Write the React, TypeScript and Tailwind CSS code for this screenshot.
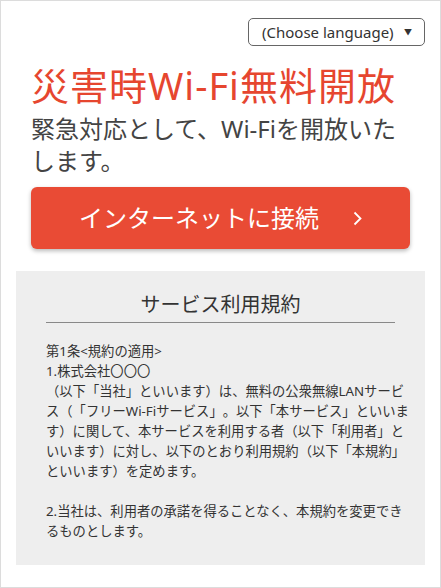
import React from 'react';

const font = { fontFamily: '"Noto Sans", "Noto Sans CJK JP", sans-serif' };

const ChevronRight = () => (
  <svg width="9" height="15" viewBox="0 0 9 15" fill="none">
    <polyline points="1.5,1.5 7.5,7.5 1.5,13.5" stroke="white" strokeWidth="1.8" />
  </svg>
);

export default function App() {
  return (
    <div
      className="w-[441px] h-[588px] border border-[#dcdcdc] bg-white px-[15px] pt-[17px] [text-spacing-trim:space-all]"
      style={font}
    >
      {/* Language picker */}
      <div className="flex justify-end">
        <div className="flex items-center justify-between w-[177px] h-[28px] border border-[#666] rounded-[5px] pl-[13px] pr-[12px] text-[15px] text-[#333]">
          <span>(Choose language)</span>
          <span className="text-[8px] text-[#333]">▼</span>
        </div>
      </div>

      <div className="px-[15px]">
        <h1 className="mt-[17px] text-[38px] leading-[44px] tracking-[1px] text-[#e6462f]">災害時Wi-Fi無料開放</h1>
        <p className="mt-[6px] text-[24px] leading-[32px] text-[#444]">緊急対応として、Wi-Fiを開放いたします。</p>

        <button className="mt-[10px] w-full h-[62px] rounded-[6px] bg-[#e94b35] shadow-[0_2px_4px_rgba(0,0,0,0.28)] flex items-center justify-center gap-[34px] text-white text-[24px]">
          <span>インターネットに接続</span>
          <ChevronRight />
        </button>
      </div>

      {/* Terms box */}
      <div className="mt-[22px] bg-[#eeeeee] px-[15px] pt-[20px] pb-[24px]">
        <div className="mx-[15px] border-b border-[#888] pb-[3px] text-center text-[20px] leading-[28px] text-[#333]">
          サービス利用規約
        </div>
        <div className="mt-[18px] pl-[15px] text-[13.3px] leading-[20px] text-[#333]">
          <p>第1条&lt;規約の適用&gt;</p>
          <p>1.株式会社〇〇〇</p>
          <p>（以下「当社」といいます）は、無料の公衆無線LANサービス（「フリーWi-Fiサービス」。以下「本サービス」といいます）に関して、本サービスを利用する者（以下「利用者」といいます）に対し、以下のとおり利用規約（以下「本規約」といいます）を定めます。</p>
          <p className="mt-[20px]">2.当社は、利用者の承諾を得ることなく、本規約を変更できるものとします。</p>
        </div>
      </div>
    </div>
  );
}
